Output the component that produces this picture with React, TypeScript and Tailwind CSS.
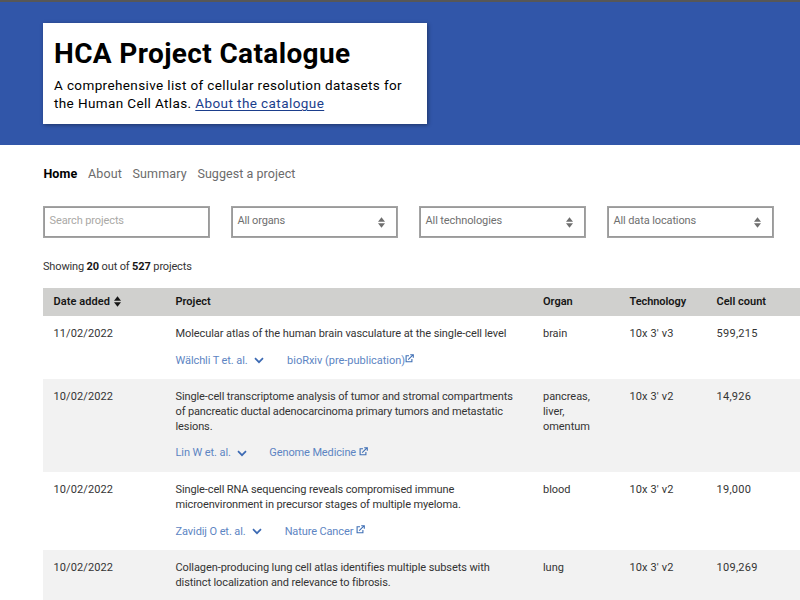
type Row = {
  date: string;
  title: { text: string; tracking: string }[];
  author?: string;
  journal?: string;
  tight?: boolean;
  organs: string[];
  technology: string;
  cells: string;
  height: string;
  linkGap?: string;
};

const rows: Row[] = [
  {
    date: "11/02/2022",
    title: [{ text: "Molecular atlas of the human brain vasculature at the single-cell level", tracking: "tracking-[-0.08px]" }],
    author: "Wälchli T et. al.",
    journal: "bioRxiv (pre-publication)",
    tight: true,
    organs: ["brain"],
    technology: "10x 3' v3",
    cells: "599,215",
    height: "h-[63px]",
    linkGap: "mt-[11.5px] gap-[23.5px]",
  },
  {
    date: "10/02/2022",
    title: [
      { text: "Single-cell transcriptome analysis of tumor and stromal compartments", tracking: "tracking-[-0.11px]" },
      { text: "of pancreatic ductal adenocarcinoma primary tumors and metastatic", tracking: "tracking-[-0.13px]" },
      { text: "lesions.", tracking: "tracking-[-0.1px]" },
    ],
    author: "Lin W et. al.",
    journal: "Genome Medicine",
    organs: ["pancreas,", "liver,", "omentum"],
    technology: "10x 3' v2",
    cells: "14,926",
    height: "h-[93px]",
    linkGap: "mt-[10.5px] gap-[22.5px]",
  },
  {
    date: "10/02/2022",
    title: [
      { text: "Single-cell RNA sequencing reveals compromised immune", tracking: "tracking-[-0.11px]" },
      { text: "microenvironment in precursor stages of multiple myeloma.", tracking: "tracking-[-0.11px]" },
    ],
    author: "Zavidij O et. al.",
    journal: "Nature Cancer",
    organs: ["blood"],
    technology: "10x 3' v2",
    cells: "19,000",
    height: "h-[78px]",
    linkGap: "mt-[11.3px] gap-[23px]",
  },
  {
    date: "10/02/2022",
    title: [
      { text: "Collagen-producing lung cell atlas identifies multiple subsets with", tracking: "tracking-[-0.08px]" },
      { text: "distinct localization and relevance to fibrosis.", tracking: "tracking-[-0.11px]" },
    ],
    organs: ["lung"],
    technology: "10x 3' v2",
    cells: "109,269",
    height: "h-[78px]",
  },
];

const filters = [
  { label: "All organs", tracking: "tracking-[-0.16px]" },
  { label: "All technologies", tracking: "tracking-[-0.1px]" },
  { label: "All data locations", tracking: "tracking-[-0.12px]" },
];

const columns = "grid grid-cols-[122px_367.5px_86.5px_87px_1fr] pl-[10.5px]";
const field = "h-[32px] w-[167px] border border-[#a4a4a4] leading-[28px] shadow-[inset_0_0_0_1px_#9a9a9a]";

function SortIcon({ className }: { className: string }) {
  return (
    <svg viewBox="0 0 7 11" className={className} fill="currentColor">
      <path d="M3.5 0.2 7 4.7H0zM3.5 10.8 0 6.3h7z" />
    </svg>
  );
}

function Chevron() {
  return (
    <svg viewBox="0 0 10 7" className="mt-[1px] ml-[6px] h-[7px] w-[10px]" fill="none" stroke="#3c6ab3" strokeWidth="1.7">
      <path d="M1 1.2 5 5.2 9 1.2" />
    </svg>
  );
}

function External() {
  return (
    <svg viewBox="0 0 9 9" className="mb-[3px] h-[9px] w-[9px]" fill="none" stroke="#3f6fb5" strokeWidth="1.1">
      <path d="M4 1.8H1.1v6h5.8V5M3.2 5.6 8 0.9M5.2 0.7h3.1v3.1" />
    </svg>
  );
}

export default function App() {
  return (
    <div className="h-[600px] w-[800px] overflow-hidden bg-white font-['Roboto',sans-serif] text-[11px] text-[#343434]">
      <header className="h-[145px] border-t-2 border-[#575757] bg-[#3156a9] pt-[21px] pl-[43px]">
        <div className="h-[101px] w-[384px] bg-white pt-[14px] pl-[11px] whitespace-nowrap text-black shadow-[1px_1px_4px_rgba(0,0,0,0.4)]">
          <h1 className="text-[28px] leading-[34px] font-bold tracking-[0.37px]">HCA Project Catalogue</h1>
          <p className="mt-[5px] text-[13.5px] leading-[18px]">
            <span className="block tracking-[0.38px]">A comprehensive list of cellular resolution datasets for</span>
            <span className="tracking-[0.38px]">the Human Cell Atlas. </span>
            <a className="tracking-[0.42px] text-[#1b3e8c] underline decoration-1 underline-offset-2">About the catalogue</a>
          </p>
        </div>
      </header>

      <nav className="flex h-[61px] gap-[10.5px] pt-[20.4px] pl-[43.4px] text-[12.5px] leading-[17px] whitespace-nowrap text-[#6b6b6b]">
        <a className="tracking-[0.14px] font-bold text-black">Home</a>
        <a className="tracking-[0.14px]">About</a>
        <a className="tracking-[0.17px]">Summary</a>
        <a className="tracking-[0.06px]">Suggest a project</a>
      </nav>

      <div className="flex gap-[21px] pl-[43px] whitespace-nowrap text-[#6f6f6f]">
        <div className={`${field} pl-[5.5px] tracking-[-0.11px] text-[#aaa9a6]`}>Search projects</div>
        {filters.map((f) => (
          <div key={f.label} className={`${field} flex justify-between pr-[12px] pl-[5.5px]`}>
            <span className={f.tracking}>{f.label}</span>
            <SortIcon className="mt-[10px] h-[11px] w-[7px]" />
          </div>
        ))}
      </div>

      <p className="mt-[21px] ml-[43px] h-[29px] leading-[16px] tracking-[-0.16px] whitespace-nowrap">
        Showing <b className="tracking-[-0.05px] text-[#161616]">20</b> out of <b className="tracking-[-0.05px] text-[#161616]">527</b> projects
      </p>

      <div className="ml-[43px] whitespace-nowrap">
        <div className={`${columns} h-[28px] bg-[#d0d0ce] leading-[27px] font-semibold text-[#161616]`}>
          <span className="flex h-[27px] items-center gap-[4px] tracking-[0.07px]">
            Date added
            <SortIcon className="h-[11px] w-[7px]" />
          </span>
          <span>Project</span>
          <span>Organ</span>
          <span className="tracking-[-0.07px]">Technology</span>
          <span>Cell count</span>
        </div>
        {rows.map((r, i) => (
          <div key={i} className={`${columns} ${r.height} pt-[10px] leading-[15.2px] ${i % 2 ? "bg-[#f2f2f2]" : "bg-white"}`}>
            <span className="tracking-[0.1px]">{r.date}</span>
            <div>
              {r.title.map((l) => (
                <div key={l.text} className={l.tracking}>{l.text}</div>
              ))}
              {r.author && (
                <div className={`flex items-center tracking-[-0.09px] text-[#5d85c3] ${r.linkGap}`}>
                  <span className="flex items-center">{r.author}<Chevron /></span>
                  <span className={`flex items-center ${r.tight ? "gap-0 tracking-[-0.02px]" : "gap-[3px] tracking-[-0.12px]"}`}>{r.journal}<External /></span>
                </div>
              )}
            </div>
            <div className="tracking-[-0.05px]">
              {r.organs.map((o) => (
                <div key={o}>{o}</div>
              ))}
            </div>
            <span className="tracking-[0.12px]">{r.technology}</span>
            <span className="tracking-[0.28px]">{r.cells}</span>
          </div>
        ))}
      </div>
    </div>
  );
}
